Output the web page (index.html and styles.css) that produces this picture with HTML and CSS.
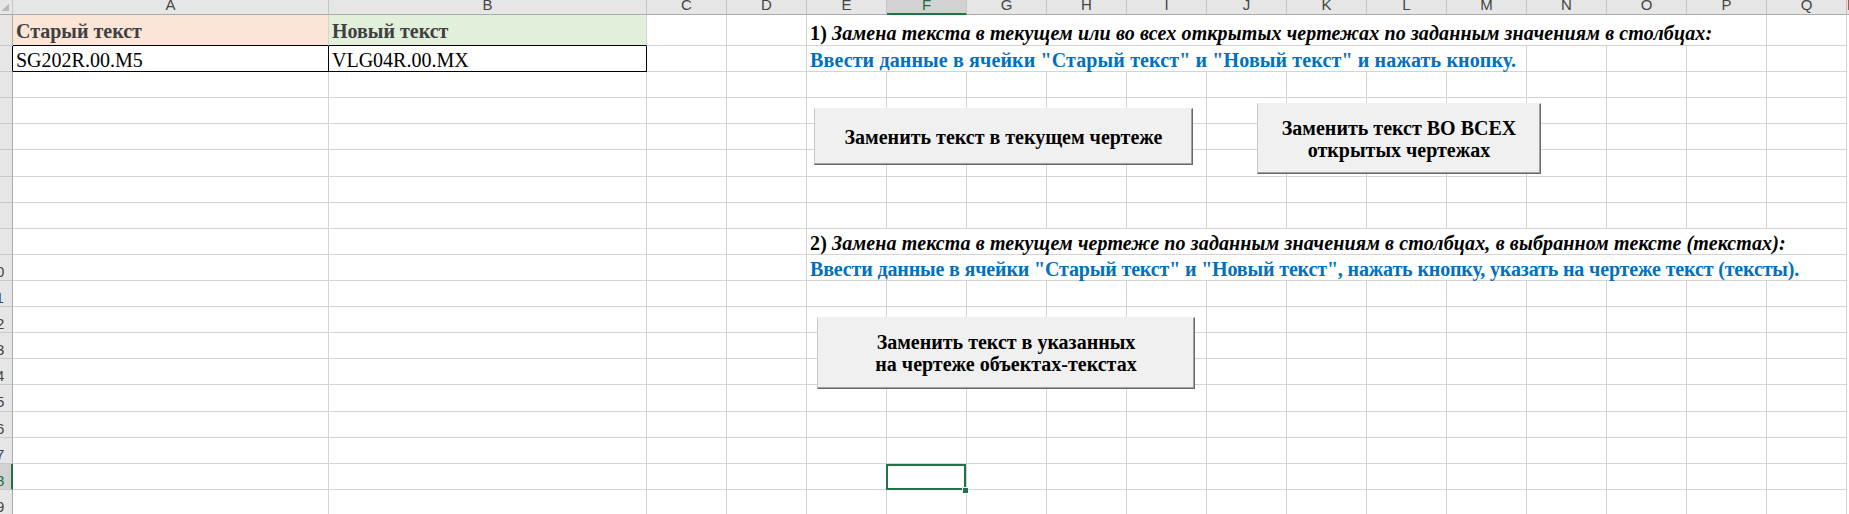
FILE: index.html
```html
<!DOCTYPE html>
<html lang="ru">
<head>
  <meta charset="UTF-8">
  <title>Замена текста в чертежах</title>
  <link rel="stylesheet" href="styles.css">
</head>
<body>
  <div class="sheet">

    <div class="row head">
      <div class="corner"></div>
      <div class="ch">A</div><div class="ch">B</div><div class="ch">C</div><div class="ch">D</div>
      <div class="ch">E</div><div class="ch sel-col">F</div><div class="ch">G</div><div class="ch">H</div>
      <div class="ch">I</div><div class="ch">J</div><div class="ch">K</div><div class="ch">L</div>
      <div class="ch">M</div><div class="ch">N</div><div class="ch">O</div><div class="ch">P</div>
      <div class="ch">Q</div><div class="ch last">R</div>
    </div>

    <div class="row r1">
      <div class="rh"><span>1</span></div>
      <div class="c title old">Старый текст</div>
      <div class="c title new">Новый текст</div>
      <div class="c"></div><div class="c"></div>
      <div class="c span12 note"><b>1)</b>&nbsp;<i>Замена текста в текущем или во всех открытых чертежах по заданным значениям в столбцах:</i></div>
      <div class="c"></div>
    </div>

    <div class="row">
      <div class="rh edge"><span>2</span></div>
      <div class="c data">SG202R.00.M5</div>
      <div class="c data">VLG04R.00.MX</div>
      <div class="c"></div><div class="c"></div>
      <div class="c span9 hint">Ввести данные в ячейки "Старый текст" и "Новый текст" и нажать кнопку.</div>
      <div class="c"></div><div class="c"></div><div class="c"></div><div class="c"></div>
    </div>

    <div class="row"><div class="rh"><span>3</span></div><div class="c"></div><div class="c"></div><div class="c"></div><div class="c"></div><div class="c"></div><div class="c"></div><div class="c"></div><div class="c"></div><div class="c"></div><div class="c"></div><div class="c"></div><div class="c"></div><div class="c"></div><div class="c"></div><div class="c"></div><div class="c"></div><div class="c"></div></div>
    <div class="row"><div class="rh"><span>4</span></div><div class="c"></div><div class="c"></div><div class="c"></div><div class="c"></div><div class="c"></div><div class="c"></div><div class="c"></div><div class="c"></div><div class="c"></div><div class="c"></div><div class="c"></div><div class="c"></div><div class="c"></div><div class="c"></div><div class="c"></div><div class="c"></div><div class="c"></div></div>
    <div class="row"><div class="rh"><span>5</span></div><div class="c"></div><div class="c"></div><div class="c"></div><div class="c"></div><div class="c"></div><div class="c"></div><div class="c"></div><div class="c"></div><div class="c"></div><div class="c"></div><div class="c"></div><div class="c"></div><div class="c"></div><div class="c"></div><div class="c"></div><div class="c"></div><div class="c"></div></div>
    <div class="row"><div class="rh"><span>6</span></div><div class="c"></div><div class="c"></div><div class="c"></div><div class="c"></div><div class="c"></div><div class="c"></div><div class="c"></div><div class="c"></div><div class="c"></div><div class="c"></div><div class="c"></div><div class="c"></div><div class="c"></div><div class="c"></div><div class="c"></div><div class="c"></div><div class="c"></div></div>
    <div class="row"><div class="rh"><span>7</span></div><div class="c"></div><div class="c"></div><div class="c"></div><div class="c"></div><div class="c"></div><div class="c"></div><div class="c"></div><div class="c"></div><div class="c"></div><div class="c"></div><div class="c"></div><div class="c"></div><div class="c"></div><div class="c"></div><div class="c"></div><div class="c"></div><div class="c"></div></div>
    <div class="row"><div class="rh"><span>8</span></div><div class="c"></div><div class="c"></div><div class="c"></div><div class="c"></div><div class="c"></div><div class="c"></div><div class="c"></div><div class="c"></div><div class="c"></div><div class="c"></div><div class="c"></div><div class="c"></div><div class="c"></div><div class="c"></div><div class="c"></div><div class="c"></div><div class="c"></div></div>

    <div class="row">
      <div class="rh"><span>9</span></div>
      <div class="c"></div><div class="c"></div><div class="c"></div><div class="c"></div>
      <div class="c span13 note"><b>2)</b>&nbsp;<i>Замена текста в текущем чертеже по заданным значениям в столбцах, в выбранном тексте (текстах):</i></div>
    </div>

    <div class="row">
      <div class="rh"><span>10</span></div>
      <div class="c"></div><div class="c"></div><div class="c"></div><div class="c"></div>
      <div class="c span13 hint long">Ввести данные в ячейки "Старый текст" и "Новый текст", нажать кнопку, указать на чертеже текст (тексты).</div>
    </div>

    <div class="row"><div class="rh"><span>11</span></div><div class="c"></div><div class="c"></div><div class="c"></div><div class="c"></div><div class="c"></div><div class="c"></div><div class="c"></div><div class="c"></div><div class="c"></div><div class="c"></div><div class="c"></div><div class="c"></div><div class="c"></div><div class="c"></div><div class="c"></div><div class="c"></div><div class="c"></div></div>
    <div class="row"><div class="rh"><span>12</span></div><div class="c"></div><div class="c"></div><div class="c"></div><div class="c"></div><div class="c"></div><div class="c"></div><div class="c"></div><div class="c"></div><div class="c"></div><div class="c"></div><div class="c"></div><div class="c"></div><div class="c"></div><div class="c"></div><div class="c"></div><div class="c"></div><div class="c"></div></div>
    <div class="row"><div class="rh"><span>13</span></div><div class="c"></div><div class="c"></div><div class="c"></div><div class="c"></div><div class="c"></div><div class="c"></div><div class="c"></div><div class="c"></div><div class="c"></div><div class="c"></div><div class="c"></div><div class="c"></div><div class="c"></div><div class="c"></div><div class="c"></div><div class="c"></div><div class="c"></div></div>
    <div class="row"><div class="rh"><span>14</span></div><div class="c"></div><div class="c"></div><div class="c"></div><div class="c"></div><div class="c"></div><div class="c"></div><div class="c"></div><div class="c"></div><div class="c"></div><div class="c"></div><div class="c"></div><div class="c"></div><div class="c"></div><div class="c"></div><div class="c"></div><div class="c"></div><div class="c"></div></div>
    <div class="row"><div class="rh"><span>15</span></div><div class="c"></div><div class="c"></div><div class="c"></div><div class="c"></div><div class="c"></div><div class="c"></div><div class="c"></div><div class="c"></div><div class="c"></div><div class="c"></div><div class="c"></div><div class="c"></div><div class="c"></div><div class="c"></div><div class="c"></div><div class="c"></div><div class="c"></div></div>
    <div class="row"><div class="rh"><span>16</span></div><div class="c"></div><div class="c"></div><div class="c"></div><div class="c"></div><div class="c"></div><div class="c"></div><div class="c"></div><div class="c"></div><div class="c"></div><div class="c"></div><div class="c"></div><div class="c"></div><div class="c"></div><div class="c"></div><div class="c"></div><div class="c"></div><div class="c"></div></div>
    <div class="row"><div class="rh"><span>17</span></div><div class="c"></div><div class="c"></div><div class="c"></div><div class="c"></div><div class="c"></div><div class="c"></div><div class="c"></div><div class="c"></div><div class="c"></div><div class="c"></div><div class="c"></div><div class="c"></div><div class="c"></div><div class="c"></div><div class="c"></div><div class="c"></div><div class="c"></div></div>
    <div class="row"><div class="rh sel-row"><span>18</span></div><div class="c"></div><div class="c"></div><div class="c"></div><div class="c"></div><div class="c"></div><div class="c sel"></div><div class="c"></div><div class="c"></div><div class="c"></div><div class="c"></div><div class="c"></div><div class="c"></div><div class="c"></div><div class="c"></div><div class="c"></div><div class="c"></div><div class="c"></div></div>
    <div class="row"><div class="rh"><span>19</span></div><div class="c"></div><div class="c"></div><div class="c"></div><div class="c"></div><div class="c"></div><div class="c"></div><div class="c"></div><div class="c"></div><div class="c"></div><div class="c"></div><div class="c"></div><div class="c"></div><div class="c"></div><div class="c"></div><div class="c"></div><div class="c"></div><div class="c"></div></div>

    <button class="btn btn-one">Заменить текст в текущем чертеже</button>
    <button class="btn btn-all">Заменить текст ВО ВСЕХ<br>открытых чертежах</button>
    <button class="btn btn-pick">Заменить текст в указанных<br>на чертеже объектах-текстах</button>

  </div>
</body>
</html>
```

FILE: styles.css
```css
body {
  margin: 0;
  overflow: hidden;
  background: #ffffff;
  font-family: "Liberation Serif", "Times New Roman", serif;
}

.sheet {
  position: relative;
  width: 1849px;
  height: 514px;
  overflow: hidden;
}

.row {
  display: grid;
  grid-template-columns: 13px 316px 318px repeat(15, 80px) 2px;
  height: 26.12px;
}

.row.head {
  height: 15px;
}

.row.r1 {
  height: 31px;
}

/* заголовки столбцов */
.corner,
.ch {
  box-sizing: border-box;
  background: #e6e6e6;
  border-right: 1px solid #c4c4c4;
  border-bottom: 1px solid #ababab;
  overflow: hidden;
}

.corner {
  position: relative;
}

.corner::after {
  content: "";
  position: absolute;
  right: 3px;
  bottom: 3px;
  width: 8px;
  height: 8px;
  background: linear-gradient(to bottom right, transparent 50%, #b8b8b8 50%);
}

.ch {
  font-family: "Liberation Sans", Arial, sans-serif;
  font-size: 15px;
  line-height: 9px;
  text-align: center;
  color: #444444;
}

.ch.last {
  border-right: none;
}

.ch.sel-col {
  background: #d2d2d2;
  border-bottom: 2px solid #217346;
  color: #1d6b41;
}

/* заголовки строк */
.rh {
  box-sizing: border-box;
  background: #e6e6e6;
  border-right: 1px solid #ababab;
  border-bottom: 1px solid #c8c8c8;
  overflow: hidden;
  font-family: "Liberation Sans", Arial, sans-serif;
  font-size: 15px;
  color: #444444;
}

.rh span {
  display: block;
  width: 34px;
  margin-left: -21px;
  margin-top: 8px;
  line-height: 17px;
  text-align: center;
}

.rh.edge {
  border-right-color: #000000;
}

.rh.sel-row {
  background: #d2d2d2;
  border-right: 2px solid #217346;
  color: #1d6b41;
}

/* ячейки */
.c {
  box-sizing: border-box;
  min-width: 0;
  display: flex;
  align-items: flex-end;
  padding: 0 3px;
  border-right: 1px solid #d4d4d4;
  border-bottom: 1px solid #d4d4d4;
  font-size: 20px;
  line-height: 22px;
  white-space: nowrap;
  color: #000000;
}

.r1 .c {
  padding-bottom: 1px;
}

.r1 .c.title {
  padding-bottom: 3px;
}

.span9 {
  grid-column: span 9;
}

.span12 {
  grid-column: span 12;
}

.span13 {
  grid-column: span 13;
}

.c.title {
  font-weight: bold;
  color: #404040;
  border-bottom-color: #000000;
}

.c.old {
  background: #fce4d6;
}

.c.new {
  background: #e2efda;
}

.c.data {
  border-right-color: #000000;
  border-bottom-color: #000000;
}

.c.note {
  font-weight: bold;
  letter-spacing: 0.13px;
}

.c.note i {
  font-style: italic;
}

.c.hint {
  font-weight: bold;
  color: #0070c0;
  letter-spacing: 0.13px;
}

.c.hint.long {
  letter-spacing: -0.15px;
}

/* выделенная ячейка */
.c.sel {
  position: relative;
}

.c.sel::before {
  content: "";
  position: absolute;
  top: 0;
  bottom: -1px;
  left: -1px;
  right: 0;
  border: 2px solid #217346;
}

.c.sel::after {
  content: "";
  position: absolute;
  right: -3px;
  bottom: -5px;
  width: 5px;
  height: 5px;
  background: #217346;
  border: 1px solid #ffffff;
}

/* кнопки макросов */
.btn {
  position: absolute;
  box-sizing: border-box;
  display: flex;
  align-items: center;
  justify-content: center;
  margin: 0;
  padding: 0;
  background: #f0f0f0;
  border: 1px solid #f0f0f0;
  border-left-color: #c8c8c8;
  border-right-color: #696969;
  border-bottom-color: #696969;
  box-shadow: inset -1px -1px 0 #a0a0a0;
  font-family: "Liberation Serif", "Times New Roman", serif;
  font-weight: bold;
  font-size: 20px;
  line-height: 22px;
  color: #000000;
  text-align: center;
}

.btn-one {
  left: 814px;
  top: 108px;
  width: 379px;
  height: 57px;
}

.btn-all {
  left: 1257px;
  top: 103px;
  width: 284px;
  height: 71px;
}

.btn-pick {
  left: 817px;
  top: 317px;
  width: 378px;
  height: 72px;
}
```
